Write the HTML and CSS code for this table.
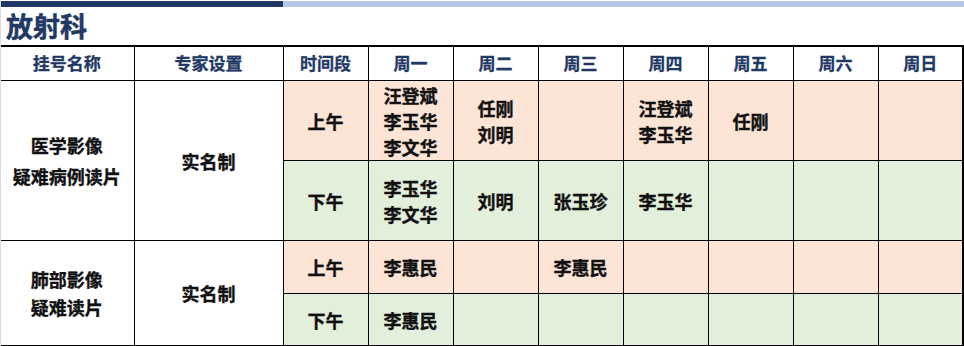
FILE: index.html
```html
<!DOCTYPE html>
<html lang="zh">
<head>
<meta charset="utf-8">
<link rel="stylesheet" href="styles.css">
</head>
<body>
<div class="page">
  <div class="topbar"><div class="bar-dark"></div><div class="bar-light"></div></div>
  <h1 class="title">放射科</h1>
  <table class="sched">
    <colgroup>
      <col class="c-name"><col class="c-set"><col class="c-time">
      <col class="c-day"><col class="c-day"><col class="c-day"><col class="c-day"><col class="c-day"><col class="c-day"><col class="c-day">
    </colgroup>
    <thead>
      <tr class="head">
        <th>挂号名称</th><th>专家设置</th><th>时间段</th>
        <th>周一</th><th>周二</th><th>周三</th><th>周四</th><th>周五</th><th>周六</th><th>周日</th>
      </tr>
    </thead>
    <tbody>
      <tr class="am r1">
        <td rowspan="2" class="plain multi">医学影像<br>疑难病例读片</td>
        <td rowspan="2" class="plain">实名制</td>
        <td>上午</td>
        <td>汪登斌<br>李玉华<br>李文华</td>
        <td>任刚<br>刘明</td>
        <td></td>
        <td>汪登斌<br>李玉华</td>
        <td>任刚</td>
        <td></td>
        <td></td>
      </tr>
      <tr class="pm r2">
        <td>下午</td>
        <td>李玉华<br>李文华</td>
        <td>刘明</td>
        <td>张玉珍</td>
        <td>李玉华</td>
        <td></td>
        <td></td>
        <td></td>
      </tr>
      <tr class="am r3">
        <td rowspan="2" class="plain multi2">肺部影像<br>疑难读片</td>
        <td rowspan="2" class="plain">实名制</td>
        <td>上午</td>
        <td>李惠民</td>
        <td></td>
        <td>李惠民</td>
        <td></td>
        <td></td>
        <td></td>
        <td></td>
      </tr>
      <tr class="pm r4">
        <td>下午</td>
        <td>李惠民</td>
        <td></td>
        <td></td>
        <td></td>
        <td></td>
        <td></td>
        <td></td>
      </tr>
    </tbody>
  </table>
</div>
</body>
</html>
```
FILE: styles.css
```css
html, body {
  margin: 0;
  padding: 0;
  background: #ffffff;
}
body {
  font-family: "Noto Sans CJK SC", "Noto Sans", sans-serif;
}
.page {
  width: 964px;
  height: 346px;
  overflow: hidden;
  border-left: 1px solid #dcdcdc;
  box-sizing: border-box;
}
.topbar {
  display: flex;
  height: 6px;
  margin-top: 1px;
}
.bar-dark {
  width: 282px;
  background: #203864;
}
.bar-light {
  flex: 1;
  background: #b4c7e7;
}
.title {
  margin: 0;
  height: 38px;
  padding-left: 5px;
  font-size: 27px;
  line-height: 37px;
  font-weight: 700;
  color: #1f3864;
  -webkit-text-stroke: 0.5px #1f3864;
}
.sched {
  border-collapse: collapse;
  table-layout: fixed;
  width: 962px;
  margin-left: -1px;
  border-top: 2px solid #000;
  border-bottom: 2px solid #000;
  border-right: 2px solid #000;
}
.c-name { width: 134px; }
.c-set { width: 149px; }
.c-time { width: 85px; }
.c-day { width: 85px; }
.sched th, .sched td {
  border: 1px solid #000;
  text-align: center;
  vertical-align: middle;
  padding: 0;
  font-weight: 700;
}
.sched tr > :first-child {
  border-left: none;
}
.sched th {
  height: 32px;
  font-size: 17px;
  color: #1f3864;
  line-height: 20px;
  padding-bottom: 1px;
  -webkit-text-stroke: 0.3px #1f3864;
}
.sched td {
  font-size: 18px;
  line-height: 26px;
  color: #111;
  -webkit-text-stroke: 0.35px #111;
}
.am td { background: #fce4d6; }
.pm td { background: #e2efda; }
.sched td.plain { background: #ffffff; }
.sched td.multi { line-height: 31px; }
.sched td.multi2 { line-height: 28px; }
.r1 td { height: 79px; }
.r2 td { height: 79px; }
.r3 td { height: 52px; }
.r4 td { height: 51px; }
```
